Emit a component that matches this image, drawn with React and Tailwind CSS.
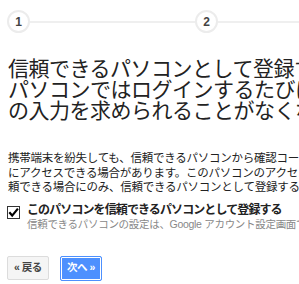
import React from 'react';

const Step = ({ n }) => (
  <div className="w-[23px] h-[23px] shrink-0 rounded-full border-2 border-[#ececec] bg-white flex items-center justify-center text-[12px] font-bold text-[#444]">
    {n}
  </div>
);

const App = () => {
  const heading = [
    '信頼できるパソコンとして登録すると、この',
    'パソコンではログインするたびに確認コード',
    'の入力を求められることがなくなります。',
  ];
  const body = [
    '携帯端末を紛失しても、信頼できるパソコンから確認コードなしでアカウント',
    'にアクセスできる場合があります。このパソコンのアクセス権限を持つユーザーを信',
    '頼できる場合にのみ、信頼できるパソコンとして登録することをおすすめします。',
  ];

  return (
    <div
      className="w-[299px] h-[284px] overflow-hidden bg-white"
      style={{ fontFamily: '"Liberation Sans", "Noto Sans CJK JP", sans-serif' }}
    >
      <div className="w-[600px] pl-[7px] pt-[10px]">
        {/* Steps */}
        <div className="flex items-center">
          <Step n="1" />
          <div className="w-[165px] h-[2px] bg-[#efefef]" />
          <Step n="2" />
          <div className="w-[120px] h-[2px] bg-[#efefef]" />
        </div>

        {/* Heading */}
        <div className="mt-[25px] pl-[1px] text-[21px] leading-[21px] tracking-[-0.5px] text-[#222]">
          {heading.map((l) => (
            <div key={l} className="whitespace-nowrap">{l}</div>
          ))}
        </div>

        {/* Body */}
        <div className="mt-[30px] pl-[1px] text-[11.5px] leading-[14.5px] tracking-[-0.25px] text-[#222]">
          {body.map((l) => (
            <div key={l} className="whitespace-nowrap">{l}</div>
          ))}
        </div>

        {/* Checkbox */}
        <div className="mt-[8px] flex items-start">
          <div className="mt-[3px] w-[13px] h-[13px] shrink-0 border border-[#333] bg-white flex items-center justify-center">
            <svg width="11" height="11" viewBox="0 0 11 11">
              <path d="M1.3 5.3 L4.2 8.6 L9.9 1.6" fill="none" stroke="#000" strokeWidth="2.2" />
            </svg>
          </div>
          <div className="ml-[7px]">
            <div className="text-[12px] leading-[15px] font-bold tracking-[-0.9px] text-[#222] whitespace-nowrap">
              このパソコンを信頼できるパソコンとして登録する
            </div>
            <div className="text-[10.5px] leading-[13px] tracking-[-0.3px] text-[#888] whitespace-nowrap">
              信頼できるパソコンの設定は、Google アカウント設定画面でいつでも変更できます。
            </div>
          </div>
        </div>

        {/* Buttons */}
        <div className="mt-[25px] flex items-center gap-[11px]">
          <button className="w-[42px] h-[24px] rounded-[2px] border border-[#dcdcdc] bg-[#f5f5f5] text-[10.5px] font-bold text-[#444] tracking-[-0.5px]">
            « 戻る
          </button>
          <button className="w-[42px] h-[25px] rounded-[2px] border border-[#4d90fe] bg-[#4d90fe] shadow-[inset_0_0_0_1px_#fff] text-[10.5px] font-bold text-white tracking-[-0.5px]">
            次へ »
          </button>
        </div>
      </div>
    </div>
  );
};

export default App;
